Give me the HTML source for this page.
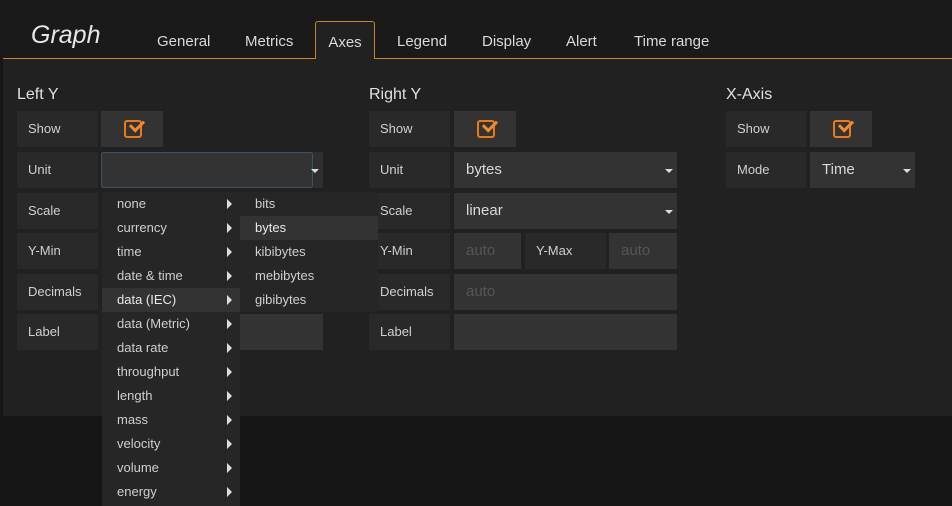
<!DOCTYPE html>
<html><head><style>
*{box-sizing:border-box;margin:0;padding:0}
body{width:952px;height:506px;background:#161616;font-family:"Liberation Sans",sans-serif;color:#d8d9da;position:relative;overflow:hidden;font-size:13px}
.a{position:absolute}
.hdr{left:0;top:0;width:952px;height:59px;background:#1a1a1a}
.line{left:3px;top:58px;width:949px;height:1px;background:#c8852b}
.title{left:31px;top:21px;font-size:25px;font-style:italic;color:#e6e6e6}
.tab{top:33px;font-size:15px;color:#d8d9da}
.axes{left:315px;top:21px;width:60px;height:39px;border:1px solid #c8852b;border-bottom:none;background:#212121;font-size:15px;text-align:center;padding-top:12px;border-radius:3px 3px 0 0}
.panel{left:3px;top:59px;width:949px;height:357px;background:#212121}
.h{font-size:16px;color:#e0e0e0}
.lb{background:#292929;height:36px;padding-left:11px;line-height:36px;color:#d0d0d0}
.in{background:#333;height:36px;padding-left:12px;line-height:36px;font-size:15px}
.ph{color:#555}
.car{position:absolute;right:4px;top:17px;border-left:4px solid transparent;border-right:4px solid transparent;border-top:4px solid #ddd}
.chk{width:18px;height:18px;border:2px solid #eb7b18;border-radius:3px;position:absolute;left:23px;top:9px}
.chk:after{content:"";position:absolute;left:4px;top:-2px;width:11px;height:6px;border-left:3px solid #f08a2a;border-bottom:3px solid #f08a2a;transform:rotate(-45deg)}
.menu{background:#262626;}
.mi{height:24px;line-height:24px;padding-left:15px;position:relative;color:#cfcfcf}
.mi .tr{position:absolute;right:8px;top:7px;border-top:5px solid transparent;border-bottom:5px solid transparent;border-left:5px solid #ddd}
.sel{background:#333}
</style></head><body>
<div class="a hdr"></div>
<div class="a line"></div>
<div class="a title">Graph</div>
<div class="a tab" style="left:157px">General</div>
<div class="a tab" style="left:245px">Metrics</div>
<div class="a axes">Axes</div>
<div class="a tab" style="left:397px">Legend</div>
<div class="a tab" style="left:482px">Display</div>
<div class="a tab" style="left:566px">Alert</div>
<div class="a tab" style="left:634px">Time range</div>
<div class="a panel"></div>

<div class="a h" style="left:17px;top:86px">Left Y</div>
<div class="a lb" style="left:17px;top:111px;width:81px">Show</div>
<div class="a in" style="left:101px;top:111px;width:62px"><div class="chk"></div></div>
<div class="a lb" style="left:17px;top:152px;width:81px">Unit</div>
<div class="a in" style="left:101px;top:152px;width:222px;background:#2f2f2f"><div style="position:absolute;left:0;top:0;width:212px;height:36px;border:1px solid #3d5466;border-radius:3px;background:#333"></div><div class="car"></div></div>
<div class="a lb" style="left:17px;top:193px;width:81px">Scale</div>
<div class="a lb" style="left:17px;top:233px;width:81px">Y-Min</div>
<div class="a lb" style="left:17px;top:274px;width:81px">Decimals</div>
<div class="a lb" style="left:17px;top:314px;width:81px">Label</div>
<div class="a in" style="left:240px;top:314px;width:83px"></div>

<div class="a h" style="left:369px;top:86px">Right Y</div>
<div class="a lb" style="left:369px;top:111px;width:81px">Show</div>
<div class="a in" style="left:454px;top:111px;width:62px"><div class="chk"></div></div>
<div class="a lb" style="left:369px;top:152px;width:81px">Unit</div>
<div class="a in" style="left:454px;top:152px;width:223px">bytes<div class="car"></div></div>
<div class="a lb" style="left:369px;top:193px;width:81px">Scale</div>
<div class="a in" style="left:454px;top:193px;width:223px">linear<div class="car"></div></div>
<div class="a lb" style="left:369px;top:233px;width:81px">Y-Min</div>
<div class="a in ph" style="left:454px;top:233px;width:67px">auto</div>
<div class="a lb" style="left:525px;top:233px;width:81px">Y-Max</div>
<div class="a in ph" style="left:609px;top:233px;width:68px">auto</div>
<div class="a lb" style="left:369px;top:274px;width:81px">Decimals</div>
<div class="a in ph" style="left:454px;top:274px;width:223px">auto</div>
<div class="a lb" style="left:369px;top:314px;width:81px">Label</div>
<div class="a in" style="left:454px;top:314px;width:223px"></div>

<div class="a h" style="left:726px;top:86px">X-Axis</div>
<div class="a lb" style="left:726px;top:111px;width:80px">Show</div>
<div class="a in" style="left:810px;top:111px;width:62px"><div class="chk"></div></div>
<div class="a lb" style="left:726px;top:152px;width:80px">Mode</div>
<div class="a in" style="left:810px;top:152px;width:105px">Time<div class="car"></div></div>

<div class="a menu" style="left:102px;top:192px;width:138px;height:314px">
<div class="mi">none<span class="tr"></span></div>
<div class="mi">currency<span class="tr"></span></div>
<div class="mi">time<span class="tr"></span></div>
<div class="mi">date &amp; time<span class="tr"></span></div>
<div class="mi sel" style="color:#e8e8e8">data (IEC)<span class="tr"></span></div>
<div class="mi">data (Metric)<span class="tr"></span></div>
<div class="mi">data rate<span class="tr"></span></div>
<div class="mi">throughput<span class="tr"></span></div>
<div class="mi">length<span class="tr"></span></div>
<div class="mi">mass<span class="tr"></span></div>
<div class="mi">velocity<span class="tr"></span></div>
<div class="mi">volume<span class="tr"></span></div>
<div class="mi">energy<span class="tr"></span></div>
</div>
<div class="a menu" style="left:240px;top:192px;width:138px;height:120px;border-radius:0 3px 3px 0">
<div class="mi">bits</div>
<div class="mi sel" style="color:#e8e8e8">bytes</div>
<div class="mi">kibibytes</div>
<div class="mi">mebibytes</div>
<div class="mi">gibibytes</div>
</div>
</body></html>
